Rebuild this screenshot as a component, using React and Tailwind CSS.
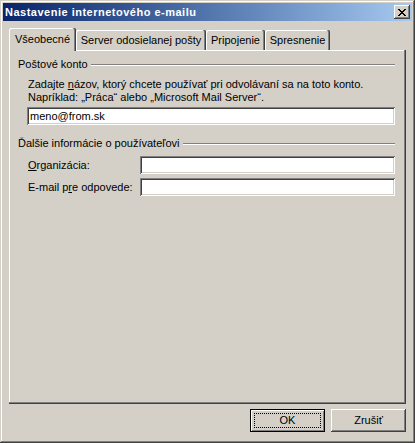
const raised = "shadow-[inset_-1px_-1px_0_#404040,inset_1px_1px_0_#ffffff,inset_-2px_-2px_0_#808080]";
const sunken = "shadow-[inset_1px_1px_0_#808080,inset_-1px_-1px_0_#ffffff,inset_2px_2px_0_#404040,inset_-2px_-2px_0_#d4d0c8]";

function CloseGlyph() {
  const rows = [
    [0, 1, 6, 7],
    [1, 2, 5, 6],
    [2, 3, 4, 5],
    [3, 4],
    [2, 3, 4, 5],
    [1, 2, 5, 6],
    [0, 1, 6, 7],
  ];
  return (
    <svg width="8" height="7" viewBox="0 0 8 7" shapeRendering="crispEdges">
      {rows.map((r, y) =>
        r.map((x) => <rect key={`${x}-${y}`} x={x} y={y} width="1" height="1" fill="#000" />)
      )}
    </svg>
  );
}

function Tab({ children, selected, w }) {
  if (selected) {
    return (
      <div
        className={`relative z-10 h-[23px] -mb-[1px] flex items-start justify-center pt-[5px] bg-[#d4d0c8] rounded-t-[2px] shadow-[inset_-1px_0_0_#404040,inset_-2px_0_0_#808080,inset_1px_1px_0_#ffffff] ${w}`}
      >
        {children}
      </div>
    );
  }
  return (
    <div
      className={`h-[20px] flex items-start justify-center pt-[4px] rounded-t-[2px] shadow-[inset_-1px_0_0_#404040,inset_-2px_0_0_#808080,inset_1px_1px_0_#ffffff] ${w}`}
    >
      {children}
    </div>
  );
}

function GroupHeader({ children }) {
  return (
    <div className="flex items-center gap-[3px] h-[13px]">
      <span className="whitespace-nowrap">{children}</span>
      <div className="flex-1 h-[2px] border-t border-t-[#808080] border-b border-b-white" />
    </div>
  );
}

function Edit({ value, className = "" }) {
  return (
    <div className={`h-[18px] bg-white ${sunken} flex items-center pl-[3px] ${className}`}>
      {value}
    </div>
  );
}

export default function App() {
  return (
    <div className="w-[415px] h-[443px] bg-[#d4d0c8] p-[3px] flex flex-col font-['Liberation_Sans',Arial,sans-serif] text-[11px] leading-[13px] text-black shadow-[inset_-1px_-1px_0_#404040,inset_1px_1px_0_#d4d0c8,inset_-2px_-2px_0_#808080,inset_2px_2px_0_#ffffff]">
      {/* Title bar */}
      <div className="h-[18px] flex items-center bg-linear-to-r from-[#0a246a] to-[#a6caf0] pl-[2px] pr-[2px]">
        <span className="flex-1 text-white font-bold tracking-[0.5px] whitespace-nowrap">
          Nastavenie internetového e-mailu
        </span>
        <div className={`w-[16px] h-[14px] shrink-0 bg-[#d4d0c8] ${raised} flex items-center justify-center`}>
          <CloseGlyph />
        </div>
      </div>

      {/* Tabs */}
      <div className="mt-[7px] px-[6px] flex flex-col">
        <div className="flex items-end h-[22px]">
          <Tab selected w="w-[67px]">Všeobecné</Tab>
          <Tab w="w-[130px]">Server odosielanej pošty</Tab>
          <Tab w="w-[59px]">Pripojenie</Tab>
          <Tab w="w-[65px]">Spresnenie</Tab>
        </div>

        {/* Panel */}
        <div className="h-[354px] shadow-[inset_-1px_-1px_0_#404040,inset_-2px_-2px_0_#808080,inset_1px_1px_0_#ffffff] pl-[9px] pr-[11px] pt-[8px] flex flex-col">
          <GroupHeader>Poštové konto</GroupHeader>
          <div className="ml-[10px] mt-[7px]">
            <div className="whitespace-nowrap">
              Zadajte <u>n</u>ázov, ktorý chcete používať pri odvolávaní sa na toto konto.
            </div>
            <div className="whitespace-nowrap">Napríklad: „Práca“ alebo „Microsoft Mail Server“.</div>
          </div>
          <Edit value="meno@from.sk" className="ml-[9px] mt-[3px]" />

          <div className="mt-[12px]">
            <GroupHeader>Ďalšie informácie o používateľovi</GroupHeader>
          </div>
          <div className="flex items-center mt-[6px]">
            <span className="w-[122px] shrink-0 pl-[10px] whitespace-nowrap">
              <u>O</u>rganizácia:
            </span>
            <Edit value="" className="flex-1" />
          </div>
          <div className="flex items-center mt-[4px]">
            <span className="w-[122px] shrink-0 pl-[10px] whitespace-nowrap">
              E-mail p<u>r</u>e odpovede:
            </span>
            <Edit value="" className="flex-1" />
          </div>
        </div>

        {/* Buttons */}
        <div className="mt-[5px] flex justify-end gap-[6px]">
          <div className="w-[75px] h-[23px] border border-black bg-[#d4d0c8] shadow-[inset_1px_1px_0_#ffffff,inset_-1px_-1px_0_#808080] p-[3px]">
            <div className="w-full h-full border border-dotted border-black flex items-center justify-center">
              OK
            </div>
          </div>
          <div className={`w-[75px] h-[23px] bg-[#d4d0c8] ${raised} flex items-center justify-center`}>
            Zrušiť
          </div>
        </div>
      </div>
    </div>
  );
}
